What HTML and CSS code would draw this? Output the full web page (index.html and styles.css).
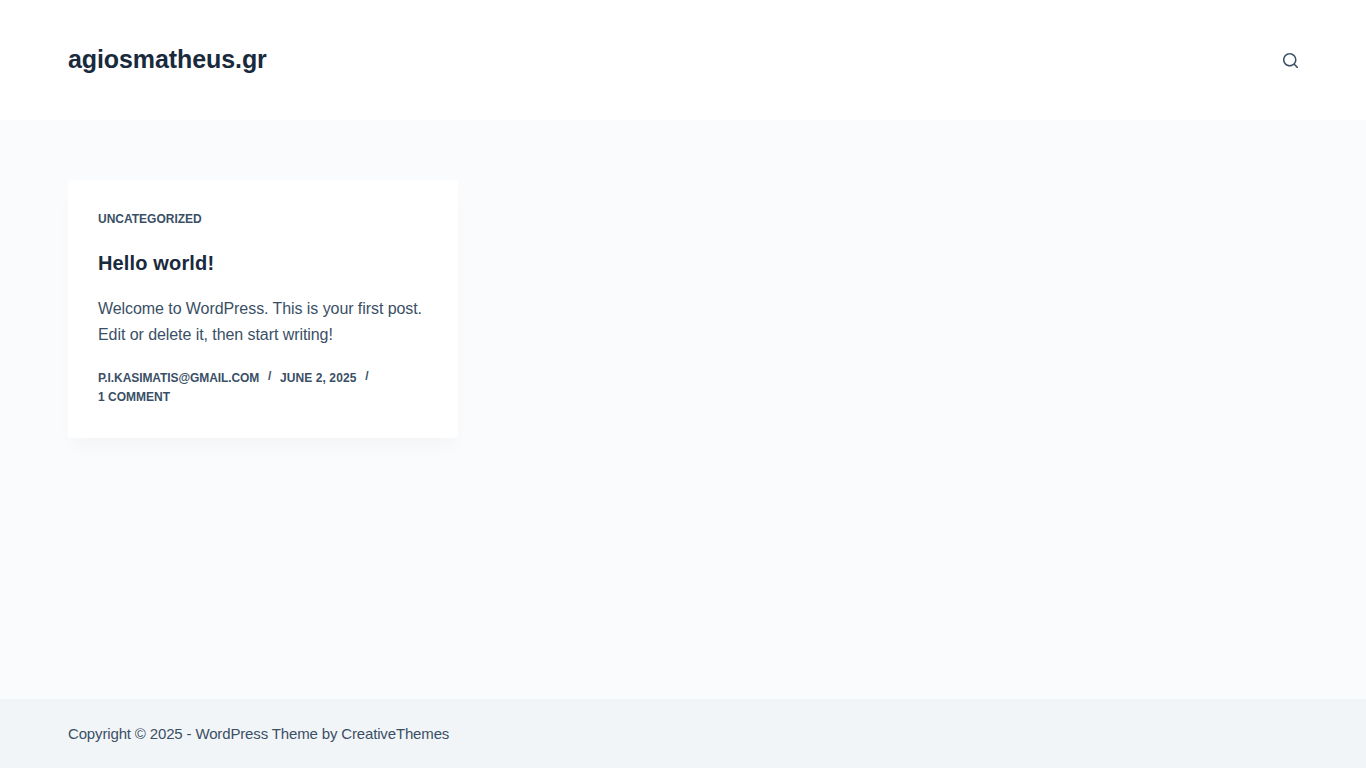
FILE: index.html
```html
<!DOCTYPE html>
<html lang="en">
<head>
<meta charset="utf-8">
<title>agiosmatheus.gr</title>
<link rel="stylesheet" href="styles.css">
</head>
<body>
<header class="site-header">
  <a class="site-title" href="#">agiosmatheus.gr</a>
  <button class="search-btn" aria-label="Search">
    <svg class="search-icon" viewBox="0 0 15 15" width="15" height="15"><path d="M14.8,13.7L12,11c0.9-1.2,1.5-2.6,1.5-4.2c0-3.7-3-6.8-6.8-6.8S0,3,0,6.8s3,6.8,6.8,6.8c1.6,0,3.1-0.6,4.2-1.5l2.8,2.8c0.1,0.1,0.3,0.2,0.5,0.2s0.4-0.1,0.5-0.2C15.1,14.5,15.1,14,14.8,13.7z M1.5,6.8c0-2.9,2.4-5.2,5.2-5.2S12,3.9,12,6.8S9.6,12,6.8,12S1.5,9.6,1.5,6.8z"/></svg>
  </button>
</header>
<main class="site-main">
  <article class="card">
    <a class="category" href="#">UNCATEGORIZED</a>
    <h2 class="post-title">Hello world!</h2>
    <p class="excerpt">Welcome to WordPress. This is your first post. Edit or delete it, then start writing!</p>
    <ul class="meta">
      <li class="meta-author">P.I.KASIMATIS@GMAIL.COM</li>
      <li class="meta-date">JUNE 2, 2025</li>
      <li>1 COMMENT</li>
    </ul>
  </article>
</main>
<footer class="site-footer">Copyright © 2025 - WordPress Theme by CreativeThemes</footer>
</body>
</html>
```
FILE: styles.css
```css
* { box-sizing: border-box; }
html, body { margin: 0; height: 100%; }
body {
  display: flex;
  flex-direction: column;
  min-height: 768px;
  font-family: "Liberation Sans", Arial, sans-serif;
  color: #3a4f66;
  background: #fafbfc;
}
.site-header {
  flex: 0 0 120px;
  background: #fff;
  display: flex;
  align-items: center;
  justify-content: space-between;
  padding: 0 68px;
}
.site-title {
  font-size: 25px;
  font-weight: 700;
  line-height: 1.5;
  letter-spacing: -0.09px;
  color: #192a3d;
  text-decoration: none;
}
.search-btn {
  border: 0;
  padding: 0;
  background: none;
  display: flex;
  color: #3a4f66;
}
.search-icon { fill: currentColor; }
.site-main {
  flex: 1 1 auto;
  padding: 60px 68px;
}
.card {
  width: 390px;
  height: 258px;
  padding: 30px;
  background: #fff;
  border-radius: 3px;
  box-shadow: 0 12px 18px -6px rgba(34, 56, 101, 0.04);
}
.category {
  display: block;
  font-size: 12px;
  font-weight: 700;
  line-height: 18px;
  color: #3a4f66;
  text-decoration: none;
}
.post-title {
  margin: 20px 0 0;
  font-size: 20px;
  font-weight: 700;
  line-height: 30px;
  letter-spacing: 0.15px;
  color: #192a3d;
}
.excerpt {
  margin: 18px 0 0;
  font-size: 16px;
  line-height: 26px;
  letter-spacing: -0.07px;
}
.meta {
  list-style: none;
  margin: 21px 0 0;
  padding: 0;
  display: flex;
  flex-wrap: wrap;
  font-size: 12px;
  font-weight: 700;
  line-height: 19px;
}
.meta-author { letter-spacing: -0.09px; }
.meta-date { letter-spacing: 0.08px; }
.meta li { display: flex; }
.meta li:not(:last-child)::after {
  content: "/";
  font-size: 12px;
  line-height: 15px;
  margin: 0 8.8px;
  color: #3a4f66;
}
.site-footer {
  flex: 0 0 69px;
  background: #f2f5f7;
  display: flex;
  align-items: center;
  padding: 0 68px;
  font-size: 15px;
  letter-spacing: -0.15px;
  color: #3a4f66;
}
```
